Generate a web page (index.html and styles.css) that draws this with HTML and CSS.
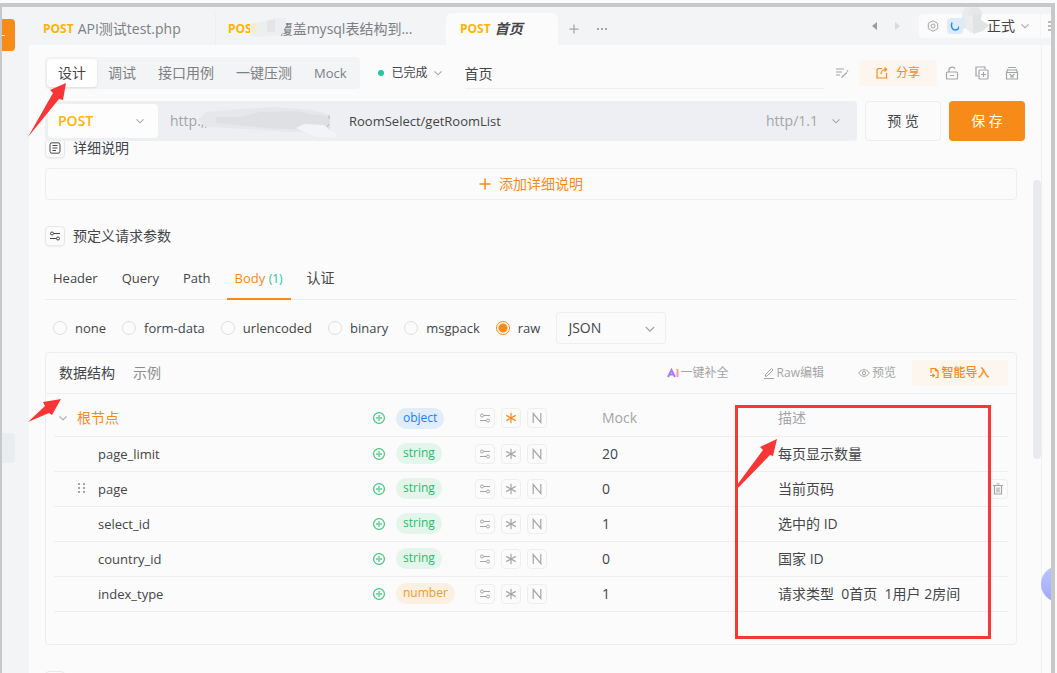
FILE: index.html
```html
<!DOCTYPE html>
<html lang="zh-CN">
<head>
<meta charset="utf-8">
<title>首页</title>
<link rel="stylesheet" href="styles.css">
</head>
<body>
<svg class="symbols" aria-hidden="true">
  <symbol id="chevron" viewBox="0 0 10 10"><path d="M1.500 3.300L5 6.800l3.500-3.500" fill="none" stroke="currentColor" stroke-width="1.1"/></symbol>
  <symbol id="plus" viewBox="0 0 12 12"><path d="M6 0.5v11M0.5 6h11" fill="none" stroke="currentColor" stroke-width="1.5"/></symbol>
  <symbol id="sliders" viewBox="0 0 12 12"><g fill="none" stroke="currentColor" stroke-width="1"><circle cx="3" cy="3.500" r="1.5"/><path d="M4.6 3.500H11M1 8.500h6.400"/><circle cx="9" cy="8.500" r="1.5"/></g></symbol>
  <symbol id="star" viewBox="0 0 12 12"><path d="M6 0.8v10.4M1.2 3.4l9.6 5.2M1.2 8.6l9.6-5.2" fill="none" stroke="currentColor" stroke-width="1.2"/></symbol>
  <symbol id="null" viewBox="0 0 12 12"><path d="M2.2 11V1.5l7.6 9V1" fill="none" stroke="currentColor" stroke-width="1.2"/></symbol>
  <symbol id="add" viewBox="0 0 12 12"><g fill="none" stroke="currentColor"><circle cx="6" cy="6" r="5.4" stroke-width="1.2"/><path d="M6 3v6M3 6h6" stroke-width="1.8" opacity=".65"/></g></symbol>
</svg>

<div class="frame">
  <aside class="rail">
    <button class="rail-main" aria-label="项目"></button>
    <button class="rail-toggle" aria-label="收起"></button>
  </aside>

  <div class="main">
    <header class="topbar">
      <nav class="files">
        <a class="file" href="#"><b class="post">POST</b><span>API测试test.php</span></a>
        <a class="file file-wide" href="#"><b class="post">POST</b><span class="masked-name">覆盖mysql表结构到...</span>
          <svg class="mask-tab" viewBox="0 0 38 22" aria-hidden="true"><path d="M0 7L14 4 26 1h10v8l-5 9-14 1-10 1-7-2z" fill="#eceef0"/><path d="M0 6h7v10H1z" fill="#f8ecd2"/><path d="M17 4l8-2v13h-8z" fill="#e3e5e8"/></svg>
        </a>
        <a class="file file-active" href="#"><b class="post">POST</b><i>首页</i></a>
        <button class="tab-tool" aria-label="新建"><svg width="10" height="10"><use href="#plus"/></svg></button>
        <button class="tab-tool" aria-label="更多"><svg width="12" height="4" viewBox="0 0 12 4"><path d="M1 1h2v2H1zM5 1h2v2H5zM9 1h2v2H9z" fill="currentColor"/></svg></button>
      </nav>
      <div class="history">
        <button aria-label="后退"><svg width="5" height="8" viewBox="0 0 5 8"><path d="M5 0v8L0 4z" fill="#9b9c9e"/></svg></button>
        <button aria-label="前进"><svg width="5" height="8" viewBox="0 0 5 8"><path d="M0 0v8l5-4z" fill="#d9dadc"/></svg></button>
      </div>
      <div class="env">
        <svg width="12" height="12" viewBox="0 0 12 12" fill="none" stroke="#a4a5a7"><path d="M6 .7l4.7 2.6v5.4L6 11.3 1.3 8.7V3.3z"/><circle cx="6" cy="6" r="2"/></svg>
        <span class="env-logo"><svg width="10" height="10" viewBox="0 0 10 10"><path d="M2 1.5C.5 5 2 9 5 9s4-2 4-4" fill="none" stroke="#2b8cf0" stroke-width="1.5"/></svg></span>
        <span class="env-name">正式</span>
        <svg width="10" height="10"><use href="#chevron"/></svg>
        <svg class="mask-env" viewBox="0 0 38 29" aria-hidden="true"><path d="M15 23l3 2" stroke="#666" stroke-width="1.5"/><circle cx="16" cy="8" r="7" fill="#ebebec"/><circle cx="22" cy="8" r="7" fill="#e6e7e8"/><path d="M4 16l6-6 6 2-2 10-7 2z" fill="#dfeaf5"/><path d="M12 10h10v8l4 4-8 5-5-5z" fill="#ececed"/><path d="M20 8h8v6l8 5-6 6-10 3z" fill="#e2e3e4"/></svg>
      </div>
      <button class="menu" aria-label="菜单"><svg width="3" height="10" viewBox="0 0 3 10"><path d="M0 1h3M0 5h3M0 9h3" stroke="#a4a5a7" stroke-width="1.4"/></svg></button>
    </header>

    <div class="page">
      <div class="toolbar">
        <div class="segment">
          <button class="on">设计</button><button>调试</button><button>接口用例</button><button>一键压测</button><button class="latin">Mock</button>
        </div>
        <button class="status"><span class="dot"></span>已完成<svg width="10" height="10"><use href="#chevron"/></svg></button>
        <input class="title" aria-label="接口名称" value="首页">
        <div class="actions">
          <button aria-label="编辑"><svg width="14" height="12" viewBox="0 0 14 12" fill="none" stroke="currentColor" stroke-width="1.2"><path d="M1 2h8M1 5h6M1 8h4M6.5 10.5l5.5-5" /><path d="M12 3.5l1 1"/></svg></button>
          <button class="share"><svg width="12" height="12" viewBox="0 0 12 12" fill="none" stroke="currentColor" stroke-width="1.2"><path d="M6 1.5H2.2L1 2.7V11h9.5V6"/><path d="M5 7c0-3 2-4.500 5.500-4.500M8.500.5l2.200 2-2.200 2"/></svg>分享</button>
          <button aria-label="锁定"><svg width="14" height="14" viewBox="0 0 14 14" fill="none" stroke="currentColor" stroke-width="1.200"><rect x="1.500" y="6" width="11" height="7" rx="1"/><path d="M4 6V4c0-3.500 5-3.800 6-1.200M5 9.500h4"/></svg></button>
          <button aria-label="复制"><svg width="14" height="14" viewBox="0 0 14 14" fill="none" stroke="currentColor" stroke-width="1.200"><rect x="4" y="4" width="9" height="9" rx="1"/><path d="M3 10H1V1h9v2M8.500 6v5M6 8.500h5"/></svg></button>
          <button aria-label="归档"><svg width="14" height="14" viewBox="0 0 14 14" fill="none" stroke="currentColor" stroke-width="1.200"><path d="M3 1.500h8M2 4h10M1.500 6.500h11V13h-11zM1.500 6.500L3 3M12.500 6.500L11 3M4.500 8l2.500 2 2.500-2M5 11h4"/></svg></button>
        </div>
      </div>

      <div class="request">
        <div class="url">
          <label class="method"><select aria-label="请求方法"><option>POST</option></select><svg width="10" height="10"><use href="#chevron"/></svg></label>
          <span class="host">http.,,
            <svg class="mask-url" viewBox="0 0 144 36" aria-hidden="true"><path d="M0 16l8-8 22-2 44-3 40 3 15 4 3 10-4 7-40 1-40-3-40-2z" fill="#e6e7eb"/><path d="M18 13h24l20-5 36-1 14 3 20 2v14h-20l-44-2-30-3-20-2z" fill="#dee0e4"/><path d="M106 20l20 1 6 5 8 4-4 4-18-1-20-9z" fill="#f3f4f7"/><path d="M131 11v4M131 20l-2 3" stroke="#bbb" stroke-width="1"/></svg>
          </span>
          <input class="path" aria-label="请求路径" value="RoomSelect/getRoomList">
          <label class="proto"><select aria-label="协议"><option>http/1.1</option></select><svg width="10" height="10"><use href="#chevron"/></svg></label>
        </div>
        <button class="preview">预 览</button>
        <button class="save">保 存</button>
      </div>

      <div class="scroll">
        <h2 class="heading heading-cut"><span class="badge"><svg width="12" height="12" viewBox="0 0 12 12" fill="none" stroke="currentColor"><rect x="1" y=".8" width="10" height="10.400" rx="2"/><path d="M3.500 3.500h5M3.500 6h5M3.500 8.500H7"/></svg></span>详细说明</h2>
        <button class="add-desc"><svg width="12" height="12"><use href="#plus"/></svg>添加详细说明</button>
        <h2 class="heading"><span class="badge"><svg width="12" height="12"><use href="#sliders"/></svg></span>预定义请求参数</h2>

        <nav class="tabs">
          <a class="latin" href="#">Header</a><a class="latin" href="#">Query</a><a class="latin" href="#">Path</a><a class="latin on" href="#">Body <small>(1)</small></a><a href="#">认证</a>
        </nav>

        <div class="types">
          <label><input type="radio" name="type">none</label>
          <label><input type="radio" name="type">form-data</label>
          <label><input type="radio" name="type">urlencoded</label>
          <label><input type="radio" name="type">binary</label>
          <label><input type="radio" name="type">msgpack</label>
          <label><input type="radio" name="type" checked>raw</label>
          <span class="format"><select aria-label="格式"><option>JSON</option></select><svg width="12" height="12"><use href="#chevron"/></svg></span>
        </div>

        <section class="card">
          <div class="card-head">
            <a class="on" href="#">数据结构</a><a href="#">示例</a>
            <div class="card-tools">
              <button><svg width="12" height="10" viewBox="0 0 12 10" fill="none" stroke-width="2"><path d="M1 9l3.500-7L8 9M2.500 6.500h4" stroke="#a77bf6"/><path d="M10.500 1v4" stroke="#f7a07c"/><path d="M10.500 5v4" stroke="#ee8fd8"/></svg>一键补全</button>
              <button><svg width="12" height="12" viewBox="0 0 12 12" fill="none" stroke="currentColor"><path d="M1 11.500h10M2.500 9.500V7.500L8.500 1.500l1.500 1.500-6 6z"/></svg>Raw编辑</button>
              <button><svg width="12" height="12" viewBox="0 0 12 12" fill="none" stroke="currentColor"><path d="M.7 6C3.500 1.500 8.500 1.500 11.300 6 8.500 10.500 3.500 10.500.7 6z"/><circle cx="6" cy="6" r="1.700"/></svg>预览</button>
              <button class="import"><svg width="9" height="12" viewBox="0 0 9 12" fill="none" stroke="currentColor" stroke-width="1.200"><path d="M1 6V1.500h4.500L8 4v6.500H5.500M5.500 1.500V4H8M0 8.500h4M2.500 6.800L4.300 8.500 2.500 10.300"/></svg>智能导入</button>
            </div>
          </div>
          <div class="card-body">
            <table>
              <colgroup><col><col class="c-type"><col class="c-flags"><col class="c-mock"><col class="c-desc"><col class="c-del"></colgroup>
              <tbody>
                <tr>
                  <td class="root"><svg width="10" height="10"><use href="#chevron"/></svg>根节点</td>
                  <td><div class="type"><button aria-label="添加"><svg width="12" height="12"><use href="#add"/></svg></button><span class="tag object">object</span></div></td>
                  <td><div class="flags"><button aria-label="设置"><svg width="12" height="12"><use href="#sliders"/></svg></button><button class="required" aria-label="必填"><svg width="12" height="12"><use href="#star"/></svg></button><button aria-label="可空"><svg width="12" height="12"><use href="#null"/></svg></button></div></td>
                  <td><input aria-label="Mock" placeholder="Mock"></td><td><input aria-label="描述" placeholder="描述"></td><td></td>
                </tr>
                <tr>
                  <td class="name">page_limit</td>
                  <td><div class="type"><button aria-label="添加"><svg width="12" height="12"><use href="#add"/></svg></button><span class="tag string">string</span></div></td>
                  <td><div class="flags"><button aria-label="设置"><svg width="12" height="12"><use href="#sliders"/></svg></button><button aria-label="必填"><svg width="12" height="12"><use href="#star"/></svg></button><button aria-label="可空"><svg width="12" height="12"><use href="#null"/></svg></button></div></td>
                  <td><input aria-label="Mock" value="20"></td><td><input aria-label="描述" value="每页显示数量"></td><td></td>
                </tr>
                <tr>
                  <td class="name dragging"><svg width="8" height="11" viewBox="0 0 8 11"><path d="M0 0h2v2H0zM5 0h2v2H5zM0 4h2v2H0zM5 4h2v2H5zM0 8h2v2H0zM5 8h2v2H5z" fill="#a4a5a7"/></svg>page</td>
                  <td><div class="type"><button aria-label="添加"><svg width="12" height="12"><use href="#add"/></svg></button><span class="tag string">string</span></div></td>
                  <td><div class="flags"><button aria-label="设置"><svg width="12" height="12"><use href="#sliders"/></svg></button><button aria-label="必填"><svg width="12" height="12"><use href="#star"/></svg></button><button aria-label="可空"><svg width="12" height="12"><use href="#null"/></svg></button></div></td>
                  <td><input aria-label="Mock" value="0"></td><td><input aria-label="描述" value="当前页码"></td>
                  <td><div class="flags"><button aria-label="删除"><svg width="12" height="12" viewBox="0 0 12 12"><path d="M1 2.500h10M4.500 1h3M2.500 3v8h7V3" fill="none" stroke="currentColor" stroke-width="1.200"/><path d="M4.200 4.500h3.600v5H4.200z" fill="currentColor" opacity=".6"/></svg></button></div></td>
                </tr>
                <tr>
                  <td class="name">select_id</td>
                  <td><div class="type"><button aria-label="添加"><svg width="12" height="12"><use href="#add"/></svg></button><span class="tag string">string</span></div></td>
                  <td><div class="flags"><button aria-label="设置"><svg width="12" height="12"><use href="#sliders"/></svg></button><button aria-label="必填"><svg width="12" height="12"><use href="#star"/></svg></button><button aria-label="可空"><svg width="12" height="12"><use href="#null"/></svg></button></div></td>
                  <td><input aria-label="Mock" value="1"></td><td><input aria-label="描述" value="选中的 ID"></td><td></td>
                </tr>
                <tr>
                  <td class="name">country_id</td>
                  <td><div class="type"><button aria-label="添加"><svg width="12" height="12"><use href="#add"/></svg></button><span class="tag string">string</span></div></td>
                  <td><div class="flags"><button aria-label="设置"><svg width="12" height="12"><use href="#sliders"/></svg></button><button aria-label="必填"><svg width="12" height="12"><use href="#star"/></svg></button><button aria-label="可空"><svg width="12" height="12"><use href="#null"/></svg></button></div></td>
                  <td><input aria-label="Mock" value="0"></td><td><input aria-label="描述" value="国家 ID"></td><td></td>
                </tr>
                <tr>
                  <td class="name">index_type</td>
                  <td><div class="type"><button aria-label="添加"><svg width="12" height="12"><use href="#add"/></svg></button><span class="tag number">number</span></div></td>
                  <td><div class="flags"><button aria-label="设置"><svg width="12" height="12"><use href="#sliders"/></svg></button><button aria-label="必填"><svg width="12" height="12"><use href="#star"/></svg></button><button aria-label="可空"><svg width="12" height="12"><use href="#null"/></svg></button></div></td>
                  <td><input aria-label="Mock" value="1"></td><td><input aria-label="描述" value="请求类型  0首页  1用户 2房间"></td><td></td>
                </tr>
              </tbody>
            </table>
          </div>
        </section>
        <h2 class="heading"><span class="badge"></span></h2>
      </div>
      <div class="thumb"></div>
    </div>
    <div class="gutter"></div>
  </div>
  <button class="assistant" aria-label="助手"></button>
</div>

<div class="highlight"></div>
<svg class="arrow arrow-design" viewBox="0 0 38 54" aria-hidden="true"><path d="M38 0L22 7l3 3L0 54l31-38 4 1z" fill="#fa3535"/></svg>
<svg class="arrow arrow-struct" viewBox="0 0 33 23" aria-hidden="true"><path d="M33 0L15 3l2 4L0 23l21-9 3 2z" fill="#fa3535"/></svg>
<svg class="arrow arrow-desc" viewBox="0 0 40 50" aria-hidden="true"><path d="M40 0L23 8l3 3L0 46v4l33-34 3 1z" fill="#fa3535"/></svg>
</body>
</html>
```
FILE: styles.css
```css
* { box-sizing: border-box; }
body {
  margin: 0;
  padding: 3px 2px 0 0;
  height: 100vh;
  overflow: hidden;
  background: #fbfbfb;
  color: #434548;
  font: 14px/20px "Open Sans", "Noto Sans CJK SC", sans-serif;
}
button, input, select { font: inherit; color: inherit; margin: 0; padding: 0; border: 0; background: none; appearance: none; outline: 0; }
button { white-space: nowrap; }
a { color: inherit; text-decoration: none; }
svg { display: block; flex: none; }
.symbols { position: absolute; width: 0; height: 0; }

.frame {
  position: relative;
  display: grid;
  grid-template-columns: 27px minmax(0, 1fr);
  height: 100%;
  overflow: hidden;
  border: solid #c8c8c8;
  border-width: 4px 4px 0 2px;
  background: #f3f4f6;
}
.rail { display: flex; flex-direction: column; justify-content: space-between; align-items: flex-start; padding: 12px 0 210px; }
.rail-main { width: 13px; height: 32px; border-radius: 0 4px 4px 0; background: linear-gradient(#fff, #fff) 0 16px / 3px 1px no-repeat #f78b19; }
.rail-toggle { width: 13px; height: 30px; border-radius: 0 4px 4px 0; background: #e9edf0; }

.main { display: grid; grid-template: 38px minmax(0, 1fr) / minmax(0, 1fr) 9px; min-height: 0; }
.topbar { grid-column: 1 / 3; display: flex; align-items: center; overflow: hidden; }
.files { display: flex; align-items: flex-end; align-self: stretch; flex: 1; }
.file { position: relative; display: flex; align-items: center; gap: 4px; height: 32px; width: 187px; padding: 0 14px; color: #7d7f83; white-space: nowrap; border-right: 1px solid #eeeff1; }
.file-wide { width: 230px; padding-left: 12px; border: 0; }
.file-active { width: 112px; border: 0; border-radius: 6px 6px 0 0; background: #fbfbfb; color: #434548; font-weight: 700; }
.post { color: #ffb400; font-size: 12px; font-weight: 700; }
.masked-name { margin-left: 16px; }
.mask-tab { position: absolute; left: 34px; top: 4px; width: 38px; height: 22px; }
.tab-tool { display: grid; place-items: center; width: 24px; height: 32px; color: #a4a5a7; }
.file-active + .tab-tool { width: 32px; }
.history { display: flex; gap: 18px; padding-right: 19px; }
.env { position: relative; display: flex; align-items: center; gap: 8px; width: 121px; height: 24px; margin-right: 1px; padding: 0 10px 0 8px; border-radius: 4px 0 0 4px; background: #fbfbfb; color: #a4a5a7; }
.env-logo { display: grid; place-items: center; width: 16px; height: 16px; border-radius: 4px; background: #ddecfa; }
.env-name { margin-left: auto; margin-right: -3px; color: #434548; }
.mask-env { position: absolute; left: 34px; top: -8px; width: 38px; height: 29px; }
.menu { display: grid; justify-content: end; align-items: center; width: 10px; height: 24px; background: #fbfbfb; }

.latin { font-size: 13px; }
.page { position: relative; display: flex; flex-direction: column; min-height: 0; background: #fbfbfb; border-right: 1px solid #eeeff1; }
.gutter { background: #fbfbfb; }
.toolbar { display: flex; align-items: center; padding: 12px 16px; }
.segment { display: flex; padding: 2px; border-radius: 4px; background: #f3f4f6; color: #7d7f83; }
.segment button { height: 28px; padding: 0 11px; border-radius: 4px; }
.segment .on { background: #fff; color: #434548; box-shadow: 0 1px 3px #0000001a; }
.status { display: flex; align-items: center; gap: 5px; padding: 0 22px 0 18px; font-size: 12px; }
.status svg, .method svg, .proto svg { color: #a4a5a7; }
.dot { width: 6px; height: 6px; margin-right: 3px; border-radius: 50%; background: #21c8a0; }
.title { flex: 1; min-width: 0; height: 32px; border-bottom: 1px solid #eeeeef; }
.actions { display: flex; align-items: center; gap: 16px; padding: 0 6px 0 11px; color: #a4a5a7; }
.share { display: flex; align-items: center; justify-content: center; gap: 8px; width: 78px; height: 26px; margin: 0 -8px 0 -6px; border-radius: 4px; background: #fcf6ef; color: #f78b19; font-size: 12px; }

.request { display: flex; gap: 8px; padding: 0 16px; }
.url { display: flex; align-items: center; flex: 1; min-width: 0; height: 40px; padding: 3px; border-radius: 4px; background: #eeeff3; }
.method, .proto, .format { position: relative; display: block; }
.method select { width: 110px; height: 34px; padding: 0 10px; border-radius: 4px; background: #fdfdfd; color: #ffb400; font-weight: 600; }
.method svg, .proto svg, .format svg { position: absolute; right: 13px; top: calc(50% - 5px); pointer-events: none; }
.host { position: relative; width: 179px; padding: 0 12px; color: #a4a5a7; }
.mask-url { position: absolute; left: 40px; top: -7px; width: 144px; height: 36px; }
.path { position: relative; flex: 1; min-width: 0; padding-left: 12px; font-size: 13px; }
.proto select { width: 88px; color: #a4a5a7; }
.request > button { width: 76px; border-radius: 4px; }
.preview { border: 1px solid #eeeeef; }
.request .save { background: #f78b19; color: #fff; }

.scroll { flex: 1; min-height: 0; overflow: hidden; padding: 0 24px 0 16px; }
.thumb { position: absolute; right: 0; top: 135px; width: 8px; height: 279px; border-radius: 4px; background: #e8ebee; }
.heading { display: flex; align-items: center; gap: 8px; height: 20px; margin: 26px 0; font-size: 14px; line-height: 14px; font-weight: 400; }
.heading-cut { margin: -3px 0 10px; }
.badge { display: grid; place-items: center; width: 20px; height: 20px; border: 1px solid #e8e8ea; border-radius: 4px; box-shadow: 0 1px 2px #0000000f; }
.add-desc { display: flex; align-items: center; justify-content: center; gap: 8px; width: 100%; height: 32px; border: 1px solid #eeeeef; border-radius: 4px; color: #f78b19; }

.tabs { display: flex; gap: 8px; height: 42px; margin-top: -14px; border-bottom: 1px solid #eeeeef; }
.tabs a { height: 42px; padding: 10px 8px; }
.tabs .on { border-bottom: 2px solid #f78b19; color: #f78b19; }
.tabs small { font-size: 12px; color: #21c8a0; }
.types { display: flex; align-items: center; gap: 16px; padding: 12px 8px 8px; }
.types label { display: flex; align-items: center; gap: 8px; font-size: 13px; }
.types input { width: 14px; height: 14px; border: 1px solid #dedfe1; border-radius: 50%; }
.types input:checked { border-color: #f78b19; background: radial-gradient(circle, #f78b19 4px, transparent 5px); }
.format select { width: 110px; height: 32px; padding: 0 11px; border: 1px solid #eeeeef; border-radius: 4px; }
.format svg { right: 10px; color: #a4a5a7; }

.card { border: 1px solid #eeeeef; border-radius: 4px; }
.card-head { display: flex; align-items: center; gap: 18px; height: 41px; padding: 0 8px 0 13px; border-bottom: 1px solid #eeeeef; color: #8b8d90; }
.card-head .on { color: #434548; }
.card-tools { display: flex; align-items: center; gap: 34px; margin-left: auto; font-size: 12px; color: #a4a5a7; }
.card-tools button { display: flex; align-items: center; gap: 2px; }
.card-tools .import { justify-content: center; width: 96px; height: 26px; margin-left: -18px; border-radius: 4px; background: #fcf6ef; color: #f78b19; font-weight: 500; }
.card-body { padding: 7px 8px 32px; }
table { width: 100%; table-layout: fixed; border-collapse: collapse; }
td { height: 35px; padding: 0; border-bottom: 1px solid #eeeeef; }
.c-type { width: 102px; }
.c-flags { width: 127px; }
.c-mock { width: 176px; }
.c-desc { width: 210px; }
.c-del { width: 20px; }
.root { color: #f78b19; padding-left: 4px; }
.root svg { display: inline-block; margin-right: 9px; color: #a4a5a7; }
.name { padding-left: 44px; font-size: 13px; }
.dragging { padding-left: 24px; }
.dragging svg { display: inline-block; margin-right: 12px; }
.type { display: flex; align-items: center; gap: 11px; }
.type button { color: #3fc57c; }
.tag { height: 21px; padding: 0 7px; border-radius: 11px; font-size: 12px; }
.object { background: #e1ecfc; color: #1780ff; }
.string { background: #e4f6ec; color: #25bd68; }
.number { background: #fcf0e0; color: #f29a2e; }
.flags { display: flex; gap: 6px; color: #a4a5a7; }
.flags button { display: grid; place-items: center; width: 20px; height: 20px; border: 1px solid #eeeeef; border-radius: 4px; }
.flags .required { color: #f78b19; }
td input { display: block; width: 100%; white-space: pre; }
td input::placeholder { color: #a4a5a7; opacity: 1; }

.assistant { position: absolute; left: calc(100% - 10px); top: 559px; width: 36px; height: 36px; border-radius: 50%; background: linear-gradient(#bcc5fd, #9faaf8); }
.highlight { position: absolute; left: 735px; top: 405px; width: 256px; height: 234px; border: 3px solid #fa3535; }
.arrow { position: absolute; }
.arrow-design { left: 28px; top: 83px; width: 38px; height: 54px; }
.arrow-struct { left: 28px; top: 399px; width: 33px; height: 23px; }
.arrow-desc { left: 737px; top: 439px; width: 40px; height: 50px; }
```
